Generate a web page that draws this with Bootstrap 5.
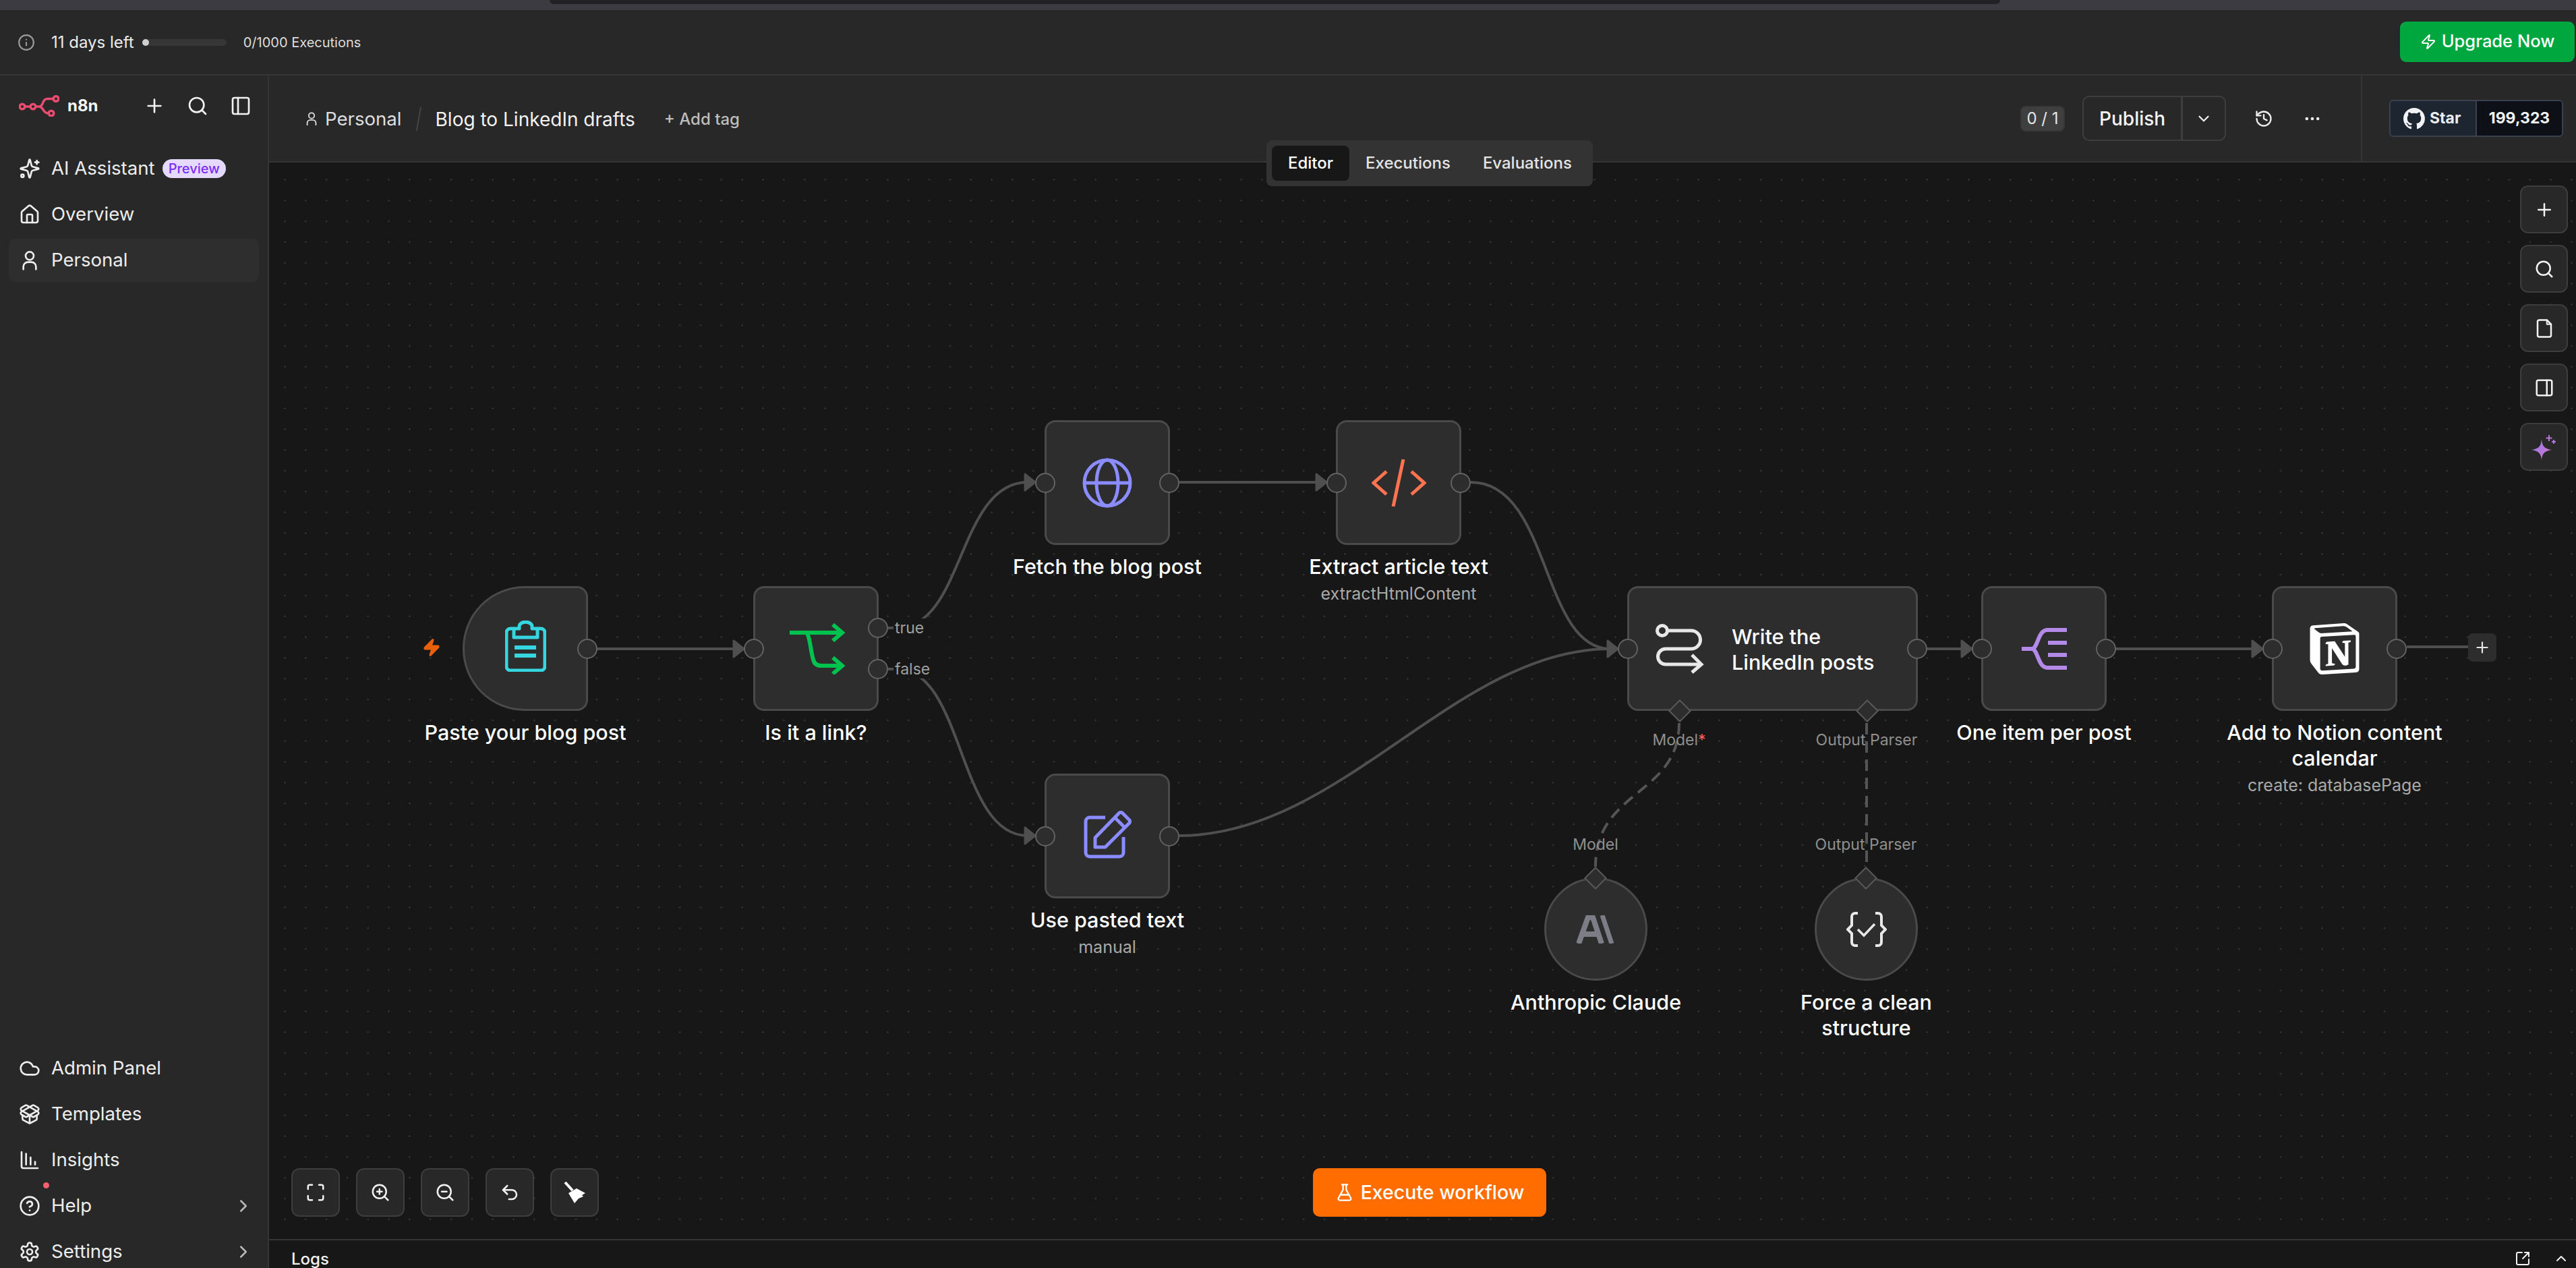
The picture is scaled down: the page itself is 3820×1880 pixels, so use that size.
<!DOCTYPE html>
<html lang="en">
<head>
    <meta charset="UTF-8">
    <title>n8n - Blog to LinkedIn drafts</title>
    <link rel="stylesheet" href="https://cdn.jsdelivr.net/npm/bootstrap@5.3.0/dist/css/bootstrap.min.css">
    <style>
        html, body { height: 100%; }
        body {
            background: #171717;
            color: #f2f2f2;
            font-family: "Inter", "Liberation Sans", sans-serif;
            font-size: 28px;
            overflow: hidden;
        }
        svg.ico { fill: none; stroke: currentColor; stroke-width: 2; stroke-linecap: round; stroke-linejoin: round; flex-shrink: 0; }

        /* top strips */
        .chrome-strip { height: 15px; background: #3b3b41; flex-shrink: 0; }
        .chrome-tab { width: 2151px; height: 6px; margin-left: 815px; background: #222226; border-radius: 0 0 10px 10px; }
        .trial-bar { height: 97px; padding: 0 2px 0 26px; background: #282828; border-bottom: 2px solid #353535; flex-shrink: 0; }
        .trial-days { font-size: 24px; margin-left: 24px; color: #ececec; }
        .trial-track { width: 125px; height: 10px; margin-left: 12px; background: #363636; border-radius: 5px; }
        .trial-fill { width: 10px; height: 10px; background: #cfcfcf; border-radius: 5px; }
        .trial-count { font-size: 20px; margin-left: 25px; color: #dcdcdc; }
        .btn.upgrade-btn { width: 259px; height: 60px; margin-top: -2px; background: #00a63e; border: 0; border-radius: 9px; color: #fff; font-size: 25.5px; font-weight: 500; }

        /* sidebar */
        .side-col { width: 399px; flex-shrink: 0; background: #282828; border-right: 2px solid #353535; padding: 0 13px; }
        .logo-row { height: 90px; margin-bottom: 16px; padding-left: 15px; }
        .logo-word { font-size: 24px; font-weight: 700; margin-left: 12px; color: #f4f4f4; }
        .logo-tools { margin-left: auto; margin-right: 11px; gap: 32px; }
        .nav-link.side-item { height: 64px; margin-bottom: 4px; padding: 0 15px; gap: 16px; color: #ededed; font-size: 27.6px; border-radius: 10px; position: relative; }
        .nav-link.side-item:hover { color: #ededed; }
        .side-item.is-active { background: #2e2e2e; }
        .side-bottom { margin-bottom: -12px; }
        .preview-pill { height: 28px; padding: 0 9px; background: #e6d9ff; color: #7c2ff0; font-size: 20px; font-weight: 500; border-radius: 14px; margin-left: -5px; }
        .side-chevron { margin-left: auto; color: #b8b8b8; margin-right: -7px; }
        .help-dot { position: absolute; left: 51px; top: -3px; width: 9px; height: 9px; border-radius: 50%; background: #f4606c; }

        /* workflow header */
        .wf-head { height: 129px; background: #282828; border-bottom: 2px solid #353535; flex-shrink: 0; }
        .crumbs { padding-left: 52px; padding-right: 58px; }
        .crumb-team { font-size: 27.6px; margin-left: 9px; color: #dedede; padding-top: 3px; }
        .crumb-slash { width: 2px; height: 36px; margin: 0 24px; background: #454545; transform: rotate(10deg); }
        .crumb-name { font-size: 28px; color: #f2f2f2; padding-top: 3px; }
        .crumb-tag { font-size: 24px; font-weight: 500; margin-left: 43px; color: #bdbdbd; padding-top: 3px; }
        .count-pill { width: 66px; height: 38px; background: #3f3f3f; border: 2px solid #383838; border-radius: 8px; font-size: 24px; color: #e6e6e6; }
        .publish-group { margin-left: 26px; height: 67px; width: 213px; }
        .btn.publish-main, .btn.publish-more { background: transparent; border: 2px solid #3e3e3e; color: #f4f4f4; font-size: 28px; font-weight: 500; border-radius: 10px; padding: 0; }
        .btn.publish-main { width: 149px; }
        .btn.publish-more { width: 66px; margin-left: -2px; }
        .head-icon { color: #ededed; }
        .star-wrap { width: 319px; padding-left: 40px; border-left: 2px solid #353535; flex-shrink: 0; }
        .gh-badge { width: 258px; height: 55px; border: 2px solid #3a424e; border-radius: 6px; overflow: hidden; font-size: 23px; font-weight: 700; }
        .gh-star { width: 128px; padding-left: 19px; gap: 7px; background: #1d2530; border-right: 2px solid #3a424e; color: #e8ebef; }
        .gh-num { flex-grow: 1; background: #0d1117; color: #f0f2f5; }

        /* canvas */
        .wf-canvas {
            position: relative;
            overflow: hidden;
            background-color: #171717;
            background-image: radial-gradient(circle at center, #444 0, #444 .8px, transparent 1.3px);
            background-size: 30.83px 30.83px;
            background-position: 8px 10px;
        }
        .wf-plane { position: absolute; left: -399px; top: -241px; width: 3820px; height: 1880px; }
        .wf-edges { position: absolute; left: 0; top: 0; }
        .wf-node { position: absolute; width: 186px; height: 185px; background: #2d2d2d; border: 3px solid #4a4a4a; border-radius: 16px; }
        .wf-node.is-trigger { border-radius: 92px 16px 16px 92px; }
        .wf-node.is-wide { width: 431px; padding-left: 38px; gap: 41px; }
        .wf-node.is-round { width: 153px; height: 153px; border-radius: 50%; }
        .wf-port { position: absolute; width: 30px; height: 30px; border-radius: 50%; background: #2d2d2d; border: 2px solid #626262; }
        .port-l { left: -17px; top: 75px; }
        .port-r { right: -17px; top: 75px; }
        .port-true { right: -17px; top: 44px; }
        .port-false { right: -17px; top: 105px; }
        .wf-diamond { position: absolute; width: 24px; height: 24px; background: #2d2d2d; border: 2px solid #5a5a5a; transform: rotate(45deg); }
        .wf-label { position: absolute; top: 100%; left: 50%; width: 400px; margin-left: -200px; padding-top: 16px; text-align: center; color: #fff; font-size: 30.5px; font-weight: 500; line-height: 38px; }
        .wf-sub { margin-top: 6px; font-size: 25px; font-weight: 400; line-height: 30px; color: #a9a9a9; }
        .wide-text { color: #fff; font-weight: 500; font-size: 30.5px; line-height: 38px; padding-top: 2px; }
        .wf-tag { position: absolute; font-size: 23px; line-height: 28px; color: #8f8f8f; white-space: nowrap; transform: translateX(-50%); }
        .wf-tag .req { color: #f4606c; }
        .branch-tag { position: absolute; font-size: 23px; line-height: 28px; color: #a0a0a0; background: #171717; padding-left: 2px; padding-right: 4px; }
        .plus-box { position: absolute; left: 3660px; top: 939px; width: 42px; height: 42px; background: #2d2d2d; border-radius: 7px; color: #e6e6e6; }

        #n-paste { left: 686px; top: 869px; }
        #n-link { left: 1117px; top: 869px; }
        #n-fetch { left: 1549px; top: 623px; }
        #n-extract { left: 1981px; top: 623px; }
        #n-pasted { left: 1549px; top: 1147px; }
        #n-write { left: 2413px; top: 869px; }
        #n-split { left: 2938px; top: 869px; }
        #n-notion { left: 3369px; top: 869px; }
        #n-claude { left: 2290px; top: 1301px; }
        #n-parser { left: 2691px; top: 1301px; }
        #d-model { left: 63px; top: 170px; }
        #d-output { left: 341px; top: 170px; }
        .wf-diamond.round-dia { left: 61px; top: -14px; }
        #t-true { left: 1325px; top: 917px; }
        #t-false { left: 1325px; top: 978px; }
        #t-model1 { left: 2490px; top: 1083px; }
        #t-output1 { left: 2768px; top: 1083px; }
        #t-model2 { left: 2366px; top: 1238px; }
        #t-output2 { left: 2767px; top: 1238px; }
        #trigger-bolt { position: absolute; left: 626px; top: 946px; color: #e8610a; }

        /* floating controls */
        .tool-stack { position: absolute; right: 12px; top: 34px; gap: 17px; }
        .tool-row { position: absolute; left: 33px; bottom: 33px; gap: 24px; }
        .btn.tool-btn { width: 71px; height: 71px; padding: 0; background: #282828; border: 2px solid #3d3d3d; border-radius: 12px; color: #f2f2f2; }
        .tool-row .btn.tool-btn { width: 72px; height: 72px; }
        .btn.run-btn { position: absolute; left: 1548px; bottom: 33px; width: 346px; height: 72px; gap: 10px; background: #ff6d00; border: 0; border-radius: 10px; color: #fff; font-size: 28.5px; font-weight: 500; }
        .view-tabs { position: absolute; left: 1479px; top: -33px; z-index: 3; width: 484px; height: 68px; padding: 8px; background: #333; border-radius: 8px; font-size: 24px; font-weight: 500; flex-wrap: nowrap; white-space: nowrap; }
        .view-tabs .nav-link { height: 52px; padding: 0 24px; color: #e4e4e4; border-radius: 8px; }
        .view-tabs .nav-link.active { background: #171717; color: #fff; }

        /* logs */
        .logs-bar { height: 43px; padding: 15px 10px 0 33px; background: #171717; border-top: 2px solid #353535; flex-shrink: 0; font-size: 24px; line-height: 25px; font-weight: 500; color: #f2f2f2; }
        .logs-tools { gap: 33px; }
    </style>
</head>
<body class="d-flex flex-column">
    <div class="chrome-strip"><div class="chrome-tab"></div></div>

    <div class="trial-bar d-flex align-items-center">
        <svg class="ico" width="26" height="26" viewBox="0 0 24 24" style="color:#9a9a9a"><circle cx="12" cy="12" r="10"/><path d="M12 16v-4M12 8h.01"/></svg>
        <span class="trial-days">11 days left</span>
        <div class="trial-track"><div class="trial-fill"></div></div>
        <span class="trial-count">0/1000 Executions</span>
        <button class="btn upgrade-btn d-flex align-items-center justify-content-center gap-2 ms-auto" type="button">
            <svg class="ico" width="24" height="24" viewBox="0 0 24 24"><path d="M4 14a1 1 0 0 1-.78-1.63l9.9-10.2a.5.5 0 0 1 .86.46l-1.92 6.02A1 1 0 0 0 13 10h7a1 1 0 0 1 .78 1.63l-9.9 10.2a.5.5 0 0 1-.86-.46l1.92-6.02A1 1 0 0 0 11 14z"/></svg>
            Upgrade Now
        </button>
    </div>

    <div class="d-flex flex-grow-1" style="min-height:0">
        <!-- sidebar -->
        <aside class="side-col d-flex flex-column justify-content-between">
            <div>
                <div class="logo-row d-flex align-items-center">
                    <svg width="60" height="32" viewBox="0 0 60 32" fill="none" stroke="#ea4b71" stroke-width="3.500"><circle cx="5" cy="17" r="3.800"/><circle cx="21" cy="17" r="3.800"/><circle cx="55" cy="5.500" r="3.800"/><circle cx="48" cy="27" r="3.800"/><path d="M9 17h8M25 17h5c7 0 4-11.500 12-11.500h9M30 17c7 0 5 10 14 10"/></svg>
                    <span class="logo-word">n8n</span>
                    <div class="logo-tools d-flex align-items-center">
                        <svg class="ico" width="32" height="32" viewBox="0 0 24 24"><path d="M5 12h14M12 5v14"/></svg>
                        <svg class="ico" width="32" height="32" viewBox="0 0 24 24"><circle cx="11" cy="11" r="8"/><path d="m21 21-4.300-4.300"/></svg>
                        <svg class="ico" width="32" height="32" viewBox="0 0 24 24"><rect x="3" y="3" width="18" height="18" rx="2"/><path d="M9 3v18"/></svg>
                    </div>
                </div>
                <nav class="nav flex-column">
                    <a class="nav-link side-item d-flex align-items-center" href="#">
                        <svg class="ico" width="32" height="32" viewBox="0 0 24 24"><path d="M9.937 15.500A2 2 0 0 0 8.500 14.063l-6.135-1.582a.5.5 0 0 1 0-.962L8.500 9.936A2 2 0 0 0 9.937 8.500l1.582-6.135a.5.5 0 0 1 .963 0L14.063 8.500A2 2 0 0 0 15.500 9.937l6.135 1.581a.5.5 0 0 1 0 .964L15.500 14.063a2 2 0 0 0-1.437 1.437l-1.582 6.135a.5.5 0 0 1-.963 0z"/><path d="M20 3v4M22 5h-4"/><circle cx="4" cy="20" r="1.500"/></svg>
                        AI Assistant <span class="preview-pill d-flex align-items-center">Preview</span>
                    </a>
                    <a class="nav-link side-item d-flex align-items-center" href="#">
                        <svg class="ico" width="32" height="32" viewBox="0 0 24 24"><path d="M15 21v-8a1 1 0 0 0-1-1h-4a1 1 0 0 0-1 1v8"/><path d="M3 10a2 2 0 0 1 .709-1.528l7-5.999a2 2 0 0 1 2.582 0l7 5.999A2 2 0 0 1 21 10v9a2 2 0 0 1-2 2H5a2 2 0 0 1-2-2z"/></svg>
                        Overview
                    </a>
                    <a class="nav-link side-item is-active d-flex align-items-center" href="#">
                        <svg class="ico" width="32" height="32" viewBox="0 0 24 24"><circle cx="12" cy="7" r="4.500"/><path d="M5 22v-3a5 5 0 0 1 5-5h4a5 5 0 0 1 5 5v3"/></svg>
                        Personal
                    </a>
                </nav>
            </div>
            <nav class="nav flex-column side-bottom">
                <a class="nav-link side-item d-flex align-items-center" href="#">
                    <svg class="ico" width="32" height="32" viewBox="0 0 24 24"><path d="M17.500 19H9a7 7 0 1 1 6.710-9h1.790a4.500 4.500 0 1 1 0 9Z"/></svg>
                    Admin Panel
                </a>
                <a class="nav-link side-item d-flex align-items-center" href="#">
                    <svg class="ico" width="32" height="32" viewBox="0 0 24 24"><path d="M12 22v-9"/><path d="M15.170 2.210a1.670 1.670 0 0 1 1.630 0L21 4.570a1.930 1.930 0 0 1 0 3.360L8.820 14.790a1.655 1.655 0 0 1-1.640 0L3 12.430a1.930 1.930 0 0 1 0-3.360z"/><path d="M20 13v3.870a2.060 2.060 0 0 1-1.110 1.830l-6 3.080a1.930 1.930 0 0 1-1.780 0l-6-3.080A2.060 2.060 0 0 1 4 16.870V13"/><path d="M21 12.430a1.930 1.930 0 0 0 0-3.360L8.830 2.200a1.640 1.640 0 0 0-1.630 0L3 4.570a1.930 1.930 0 0 0 0 3.360l12.180 6.860a1.636 1.636 0 0 0 1.630 0z"/></svg>
                    Templates
                </a>
                <a class="nav-link side-item d-flex align-items-center" href="#">
                    <svg class="ico" width="32" height="32" viewBox="0 0 24 24"><path d="M13 17V9M18 17v-3M8 17V5"/><path d="M3 3v16a2 2 0 0 0 2 2h16"/></svg>
                    Insights
                </a>
                <a class="nav-link side-item d-flex align-items-center" href="#">
                    <span class="help-dot"></span>
                    <svg class="ico" width="32" height="32" viewBox="0 0 24 24"><circle cx="12" cy="12" r="10"/><path d="M9.090 9a3 3 0 0 1 5.830 1c0 2-3 3-3 3M12 17h.01"/></svg>
                    Help
                    <svg class="ico side-chevron" width="30" height="30" viewBox="0 0 24 24"><path d="m9 18 6-6-6-6"/></svg>
                </a>
                <a class="nav-link side-item d-flex align-items-center" href="#">
                    <svg class="ico" width="32" height="32" viewBox="0 0 24 24"><path d="M12.220 2h-.44a2 2 0 0 0-2 2v.18a2 2 0 0 1-1 1.730l-.43.25a2 2 0 0 1-2 0l-.15-.08a2 2 0 0 0-2.730.73l-.22.38a2 2 0 0 0 .73 2.730l.15.1a2 2 0 0 1 1 1.720v.51a2 2 0 0 1-1 1.740l-.15.09a2 2 0 0 0-.73 2.730l.22.38a2 2 0 0 0 2.730.73l.15-.08a2 2 0 0 1 2 0l.43.25a2 2 0 0 1 1 1.730V20a2 2 0 0 0 2 2h.44a2 2 0 0 0 2-2v-.18a2 2 0 0 1 1-1.730l.43-.25a2 2 0 0 1 2 0l.15.08a2 2 0 0 0 2.730-.73l.22-.39a2 2 0 0 0-.73-2.730l-.15-.08a2 2 0 0 1-1-1.740v-.5a2 2 0 0 1 1-1.740l.15-.09a2 2 0 0 0 .73-2.730l-.22-.38a2 2 0 0 0-2.730-.73l-.15.08a2 2 0 0 1-2 0l-.43-.25a2 2 0 0 1-1-1.730V4a2 2 0 0 0-2-2z"/><circle cx="12" cy="12" r="3"/></svg>
                    Settings
                    <svg class="ico side-chevron" width="30" height="30" viewBox="0 0 24 24"><path d="m9 18 6-6-6-6"/></svg>
                </a>
            </nav>
        </aside>

        <main class="d-flex flex-column flex-grow-1" style="min-width:0">
            <header class="wf-head d-flex">
                <div class="crumbs d-flex align-items-center flex-grow-1">
                    <svg class="ico" width="22" height="22" viewBox="0 0 24 24" style="color:#dedede"><circle cx="12" cy="7" r="4.500"/><path d="M5 22v-3a5 5 0 0 1 5-5h4a5 5 0 0 1 5 5v3"/></svg>
                    <span class="crumb-team">Personal</span>
                    <span class="crumb-slash"></span>
                    <span class="crumb-name">Blog to LinkedIn drafts</span>
                    <span class="crumb-tag">+ Add tag</span>
                    <div class="d-flex align-items-center ms-auto">
                        <span class="count-pill d-flex align-items-center justify-content-center">0 / 1</span>
                        <div class="btn-group publish-group">
                            <button class="btn publish-main" type="button">Publish</button>
                            <button class="btn publish-more d-flex align-items-center justify-content-center" type="button"><svg class="ico" width="26" height="26" viewBox="0 0 24 24"><path d="m6 9 6 6 6-6"/></svg></button>
                        </div>
                        <svg class="ico head-icon" width="28" height="28" viewBox="0 0 24 24" style="margin-left:42px"><path d="M3 12a9 9 0 1 0 9-9 9.750 9.750 0 0 0-6.740 2.740L3 8"/><path d="M3 3v5h5M12 7v5l4 2"/></svg>
                        <svg class="ico head-icon" width="28" height="28" viewBox="0 0 24 24" style="margin-left:44px"><circle cx="5" cy="12" r="1"/><circle cx="12" cy="12" r="1"/><circle cx="19" cy="12" r="1"/></svg>
                    </div>
                </div>
                <div class="star-wrap d-flex align-items-center">
                    <div class="gh-badge d-flex">
                        <div class="gh-star d-flex align-items-center">
                            <svg width="32" height="32" viewBox="0 0 16 16" fill="#f0f2f5"><path d="M8 0C3.580 0 0 3.580 0 8c0 3.540 2.290 6.530 5.470 7.590.4.07.55-.17.55-.38 0-.19-.01-.82-.01-1.490-2.010.37-2.530-.49-2.690-.94-.09-.23-.48-.94-.82-1.130-.28-.15-.68-.52-.01-.53.63-.01 1.080.58 1.230.82.72 1.210 1.870.87 2.330.66.07-.52.28-.87.51-1.070-1.780-.2-3.640-.89-3.640-3.950 0-.87.31-1.590.82-2.150-.08-.2-.36-1.020.08-2.120 0 0 .67-.21 2.200.82.64-.18 1.320-.27 2-.27.68 0 1.360.09 2 .27 1.530-1.040 2.200-.82 2.200-.82.44 1.100.16 1.920.08 2.120.51.56.82 1.270.82 2.150 0 3.070-1.870 3.750-3.650 3.950.29.25.54.73.54 1.480 0 1.070-.01 1.930-.01 2.200 0 .21.15.46.55.38A8.013 8.013 0 0016 8c0-4.420-3.580-8-8-8z"/></svg>
                            Star
                        </div>
                        <div class="gh-num d-flex align-items-center justify-content-center">199,323</div>
                    </div>
                </div>
            </header>

            <div class="position-relative flex-grow-1 d-flex flex-column" style="min-height:0">
                <ul class="nav view-tabs">
                    <li class="nav-item"><a class="nav-link active d-flex align-items-center" href="#">Editor</a></li>
                    <li class="nav-item"><a class="nav-link d-flex align-items-center" href="#">Executions</a></li>
                    <li class="nav-item"><a class="nav-link d-flex align-items-center" href="#">Evaluations</a></li>
                </ul>

                <section class="wf-canvas flex-grow-1">
                    <div class="wf-plane">
                        <!-- edges, in page coordinates -->
                        <svg class="wf-edges" width="3820" height="1880" fill="none" stroke="#4f4f4f" stroke-width="4">
                            <defs>
                                <path id="arrow-head" d="M-14 -12 L1 0 L-14 12 Z" fill="#4f4f4f" stroke="#4f4f4f" stroke-width="3" stroke-linejoin="round"/>
                            </defs>
                            <path d="M885 962H1092"/><use href="#arrow-head" x="1102" y="962"/>
                            <path d="M1317 931H1330C1430 931 1420 715 1524 715"/><use href="#arrow-head" x="1534" y="715"/>
                            <path d="M1317 992H1330C1430 992 1420 1239 1524 1239"/><use href="#arrow-head" x="1534" y="1239"/>
                            <path d="M1749 715H1956"/><use href="#arrow-head" x="1966" y="715"/>
                            <path d="M2181 715C2300 715 2285 962 2388 962"/><use href="#arrow-head" x="2398" y="962"/>
                            <path d="M1749 1239C1990 1239 2158 962 2388 962"/>
                            <path d="M2858 962H2913"/><use href="#arrow-head" x="2923" y="962"/>
                            <path d="M3136 962H3344"/><use href="#arrow-head" x="3354" y="962"/>
                            <path d="M3569 959H3662"/>
                            <g stroke-dasharray="17 10" stroke="#555">
                                <path d="M2490 1072C2490 1180 2366 1170 2366 1285"/>
                                <path d="M2768 1072V1285"/>
                            </g>
                        </svg>

                        <svg id="trigger-bolt" class="ico" width="28" height="28" viewBox="0 0 24 24" style="fill:currentColor"><path d="M4 14a1 1 0 0 1-.78-1.630l9.900-10.200a.5.5 0 0 1 .86.46l-1.920 6.020A1 1 0 0 0 13 10h7a1 1 0 0 1 .78 1.630l-9.900 10.200a.5.5 0 0 1-.86-.46l1.920-6.020A1 1 0 0 0 11 14z"/></svg>

                        <div id="n-paste" class="wf-node is-trigger d-flex align-items-center justify-content-center">
                            <svg width="61" height="76" viewBox="0 0 61 76" fill="none" stroke="#35d6e0" stroke-width="5" style="margin-top:-8px"><path d="M13 12H8a6 6 0 0 0-6 6V68a6 6 0 0 0 6 6H53a6 6 0 0 0 6-6V18a6 6 0 0 0-6-6H48"/><path d="M13 25V12H21V9a9 6.500 0 0 1 19 0V12H48V25Z" stroke-linejoin="round"/><path d="M14 40H46M14 52H46" stroke-width="6"/></svg>
                            <span class="wf-port port-r"></span>
                            <div class="wf-label">Paste your blog post</div>
                        </div>
                        <div id="n-link" class="wf-node d-flex align-items-center justify-content-center">
                            <svg width="82" height="76" viewBox="0 0 82 76" fill="none" stroke="#00c24f" stroke-width="6" style="margin-left:3px"><path d="M0 14H78M24 14C30 16 31 42 35 54Q37 63 47 63H78"/><path d="M64 2 78 14 64 26M64 51 78 63 64 75"/></svg>
                            <span class="wf-port port-l"></span><span class="wf-port port-true"></span><span class="wf-port port-false"></span>
                            <div class="wf-label">Is it a link?</div>
                        </div>
                        <div id="n-fetch" class="wf-node d-flex align-items-center justify-content-center">
                            <svg width="74" height="74" viewBox="0 0 74 74" fill="none" stroke="#8a8cff" stroke-width="5"><circle cx="37" cy="37" r="34"/><ellipse cx="37" cy="37" rx="16" ry="34"/><path d="M3 37H71"/></svg>
                            <span class="wf-port port-l"></span><span class="wf-port port-r"></span>
                            <div class="wf-label">Fetch the blog post</div>
                        </div>
                        <div id="n-extract" class="wf-node d-flex align-items-center justify-content-center">
                            <svg width="81" height="70" viewBox="0 0 81 70" fill="none" stroke="#ff7350" stroke-width="5"><path d="M22 18 3 35 22 52M59 18 78 35 59 52M47 0 32 70"/></svg>
                            <span class="wf-port port-l"></span><span class="wf-port port-r"></span>
                            <div class="wf-label">Extract article text<div class="wf-sub">extractHtmlContent</div></div>
                        </div>
                        <div id="n-pasted" class="wf-node d-flex align-items-center justify-content-center">
                            <svg width="72" height="72" viewBox="0 0 72 72" fill="none" stroke="#8a8cff" stroke-width="5" style="margin-top:-4px"><path d="M33 10H10a6 6 0 0 0-6 6V62a6 6 0 0 0 6 6H54a6 6 0 0 0 6-6V39"/><path d="M18 54V40L54 3Q56 2 58 3L69 14Q70 16 69 18L33 54Z" stroke-linejoin="round"/><path d="M47 10 62 25"/></svg>
                            <span class="wf-port port-l"></span><span class="wf-port port-r"></span>
                            <div class="wf-label">Use pasted text<div class="wf-sub">manual</div></div>
                        </div>
                        <div id="n-write" class="wf-node is-wide d-flex align-items-center">
                            <svg width="73" height="74" viewBox="0 0 73 74" fill="none" stroke="#e8e8e8" stroke-width="5" class="flex-shrink-0"><circle cx="11" cy="10" r="7.500"/><path d="M19 10H54a13.500 13.500 0 0 1 0 27H16a11.500 11.500 0 0 0 0 23H69"/><path d="M55 46 69 60 55 72"/></svg>
                            <div class="wide-text">Write the<br>LinkedIn posts</div>
                            <span class="wf-port port-l"></span><span class="wf-port port-r"></span>
                            <span id="d-model" class="wf-diamond"></span><span id="d-output" class="wf-diamond"></span>
                        </div>
                        <div id="n-split" class="wf-node d-flex align-items-center justify-content-center">
                            <svg width="67" height="62" viewBox="0 0 67 62" fill="none" stroke="#b48ae8" stroke-width="6"><path d="M0 31H15C24 31 24 3 38 3H67M15 31C24 31 24 59 38 59H67M39 22H67M39 40H67"/></svg>
                            <span class="wf-port port-l"></span><span class="wf-port port-r"></span>
                            <div class="wf-label">One item per post</div>
                        </div>
                        <div id="n-notion" class="wf-node d-flex align-items-center justify-content-center">
                            <svg width="76" height="76" viewBox="0 0 24 24" fill="#fff"><path d="M4.459 4.208c.746.606 1.026.56 2.428.466l13.215-.793c.28 0 .047-.28-.046-.326L17.860 1.968c-.42-.326-.981-.7-2.055-.607L3.010 2.295c-.466.046-.56.28-.374.466zm.793 3.080v13.904c0 .747.373 1.027 1.214.98l14.523-.84c.841-.046.935-.56.935-1.167V6.354c0-.606-.233-.933-.748-.887l-15.177.887c-.56.047-.747.327-.747.933zm14.337.745c.093.42 0 .84-.42.888l-.7.14v10.264c-.608.327-1.168.514-1.635.514-.748 0-.935-.234-1.495-.933l-4.577-7.186v6.952L12.210 19s0 .84-1.168.84l-3.222.186c-.093-.186 0-.653.327-.746l.84-.233V9.854L7.822 9.760c-.094-.42.14-1.026.793-1.073l3.456-.233 4.764 7.279v-6.440l-1.215-.139c-.093-.514.28-.887.747-.933zM1.936 1.035l13.310-.98c1.634-.14 2.055-.047 3.082.7l4.249 2.986c.7.513.934.653.934 1.213v16.378c0 1.026-.373 1.634-1.680 1.726l-15.458.934c-.98.047-1.448-.093-1.962-.747l-3.129-4.060c-.56-.747-.793-1.306-.793-1.960V2.667c0-.839.374-1.540 1.447-1.632z"/></svg>
                            <span class="wf-port port-l"></span><span class="wf-port port-r"></span>
                            <div class="wf-label">Add to Notion content calendar<div class="wf-sub">create: databasePage</div></div>
                        </div>
                        <div id="n-claude" class="wf-node is-round d-flex align-items-center justify-content-center">
                            <svg width="58" height="42" viewBox="0 0 58 42" fill="none" stroke="#7d7d88" stroke-width="8"><path d="M3 42 17 3H24L37 42M9 28H32"/><path d="M38 0 52 42" stroke-width="7"/></svg>
                            <span class="wf-diamond round-dia"></span>
                            <div class="wf-label">Anthropic Claude</div>
                        </div>
                        <div id="n-parser" class="wf-node is-round d-flex align-items-center justify-content-center">
                            <svg width="60" height="52" viewBox="0 0 60 52" fill="none" stroke="#e8e8e8" stroke-width="4"><path d="M17 2H13a5 5 0 0 0-5 5V20L2 26 8 32V45a5 5 0 0 0 5 5H17M43 2H47a5 5 0 0 1 5 5V20L58 26 52 32V45a5 5 0 0 1-5 5H43"/><path d="M17 26 26 35 42 18" stroke-width="3.500"/></svg>
                            <span class="wf-diamond round-dia"></span>
                            <div class="wf-label">Force a clean<br>structure</div>
                        </div>

                        <span id="t-true" class="branch-tag">true</span>
                        <span id="t-false" class="branch-tag">false</span>
                        <span id="t-model1" class="wf-tag">Model<span class="req">*</span></span>
                        <span id="t-output1" class="wf-tag">Output Parser</span>
                        <span id="t-model2" class="wf-tag">Model</span>
                        <span id="t-output2" class="wf-tag">Output Parser</span>

                        <div class="plus-box d-flex align-items-center justify-content-center">
                            <svg class="ico" width="26" height="26" viewBox="0 0 24 24"><path d="M5 12h14M12 5v14"/></svg>
                        </div>
                    </div>

                    <div class="tool-stack d-flex flex-column">
                        <button class="btn tool-btn d-flex align-items-center justify-content-center" type="button"><svg class="ico" width="30" height="30" viewBox="0 0 24 24"><path d="M5 12h14M12 5v14"/></svg></button>
                        <button class="btn tool-btn d-flex align-items-center justify-content-center" type="button"><svg class="ico" width="30" height="30" viewBox="0 0 24 24"><circle cx="11" cy="11" r="8"/><path d="m21 21-4.300-4.300"/></svg></button>
                        <button class="btn tool-btn d-flex align-items-center justify-content-center" type="button"><svg class="ico" width="30" height="30" viewBox="0 0 24 24"><path d="M6 2h9l5 5v13a2 2 0 0 1-2 2H6a2 2 0 0 1-2-2V4a2 2 0 0 1 2-2z"/><path d="M15 2v5h5" stroke-width="1.500"/></svg></button>
                        <button class="btn tool-btn d-flex align-items-center justify-content-center" type="button"><svg class="ico" width="30" height="30" viewBox="0 0 24 24"><rect x="3" y="3" width="18" height="18" rx="2"/><path d="M15 3v18"/></svg></button>
                        <button class="btn tool-btn d-flex align-items-center justify-content-center" type="button">
                            <svg width="38" height="38" viewBox="0 0 38 38"><defs><linearGradient id="spark" x1="0" y1="0" x2="1" y2="1"><stop offset="0" stop-color="#8f7bf5"/><stop offset="1" stop-color="#d874c4"/></linearGradient></defs><path d="M15 7C16 17 18 21 30 23 18 25 16 29 15 38 14 29 12 25 0 23 12 21 14 17 15 7Z" fill="url(#spark)"/><path d="M26 1v9M21.500 5.500h9M33 8v6M30 11h6" stroke="#b874d8" stroke-width="2" fill="none"/></svg>
                        </button>
                    </div>

                    <div class="tool-row d-flex">
                        <button class="btn tool-btn d-flex align-items-center justify-content-center" type="button"><svg class="ico" width="30" height="30" viewBox="0 0 24 24"><path d="M8 3H5a2 2 0 0 0-2 2v3M21 8V5a2 2 0 0 0-2-2h-3M3 16v3a2 2 0 0 0 2 2h3M16 21h3a2 2 0 0 0 2-2v-3"/></svg></button>
                        <button class="btn tool-btn d-flex align-items-center justify-content-center" type="button"><svg class="ico" width="30" height="30" viewBox="0 0 24 24"><circle cx="11" cy="11" r="8"/><path d="m21 21-4.300-4.300M11 8v6M8 11h6"/></svg></button>
                        <button class="btn tool-btn d-flex align-items-center justify-content-center" type="button"><svg class="ico" width="30" height="30" viewBox="0 0 24 24"><circle cx="11" cy="11" r="8"/><path d="m21 21-4.300-4.300M8 11h6"/></svg></button>
                        <button class="btn tool-btn d-flex align-items-center justify-content-center" type="button"><svg class="ico" width="30" height="30" viewBox="0 0 24 24"><path d="M9 14 4 9l5-5"/><path d="M4 9h10.500a5.500 5.500 0 0 1 5.500 5.500a5.500 5.500 0 0 1-5.500 5.500H11"/></svg></button>
                        <button class="btn tool-btn d-flex align-items-center justify-content-center" type="button"><svg width="33" height="33" viewBox="0 0 33 33" fill="#fff"><path d="M2 1 13 13" stroke="#fff" stroke-width="4" fill="none"/><path d="M7 17 19 10 32 17 27 20 29 22 22 25 16 32Z"/></svg></button>
                    </div>

                    <button class="btn run-btn d-flex align-items-center justify-content-center" type="button">
                        <svg class="ico" width="28" height="28" viewBox="0 0 24 24"><path d="M14 2v6a2 2 0 0 0 .245.96l5.510 10.080A2 2 0 0 1 18 22H6a2 2 0 0 1-1.755-2.960l5.510-10.080A2 2 0 0 0 10 8V2"/><path d="M6.453 15h11.094M8.500 2h7"/></svg>
                        Execute workflow
                    </button>
                </section>

                <div class="logs-bar d-flex align-items-start justify-content-between">
                    <span>Logs</span>
                    <div class="logs-tools d-flex align-items-center">
                        <svg class="ico" width="24" height="24" viewBox="0 0 24 24"><path d="M21 13v6a2 2 0 0 1-2 2H5a2 2 0 0 1-2-2V5a2 2 0 0 1 2-2h6"/><path d="m21 3-9 9M15 3h6v6"/></svg>
                        <svg class="ico" width="24" height="24" viewBox="0 0 24 24"><path d="m18 15-6-6-6 6"/></svg>
                    </div>
                </div>
            </div>
        </main>
    </div>
    <script src="https://cdn.jsdelivr.net/npm/bootstrap@5.3.0/dist/js/bootstrap.bundle.min.js"></script>
</body>
</html>
